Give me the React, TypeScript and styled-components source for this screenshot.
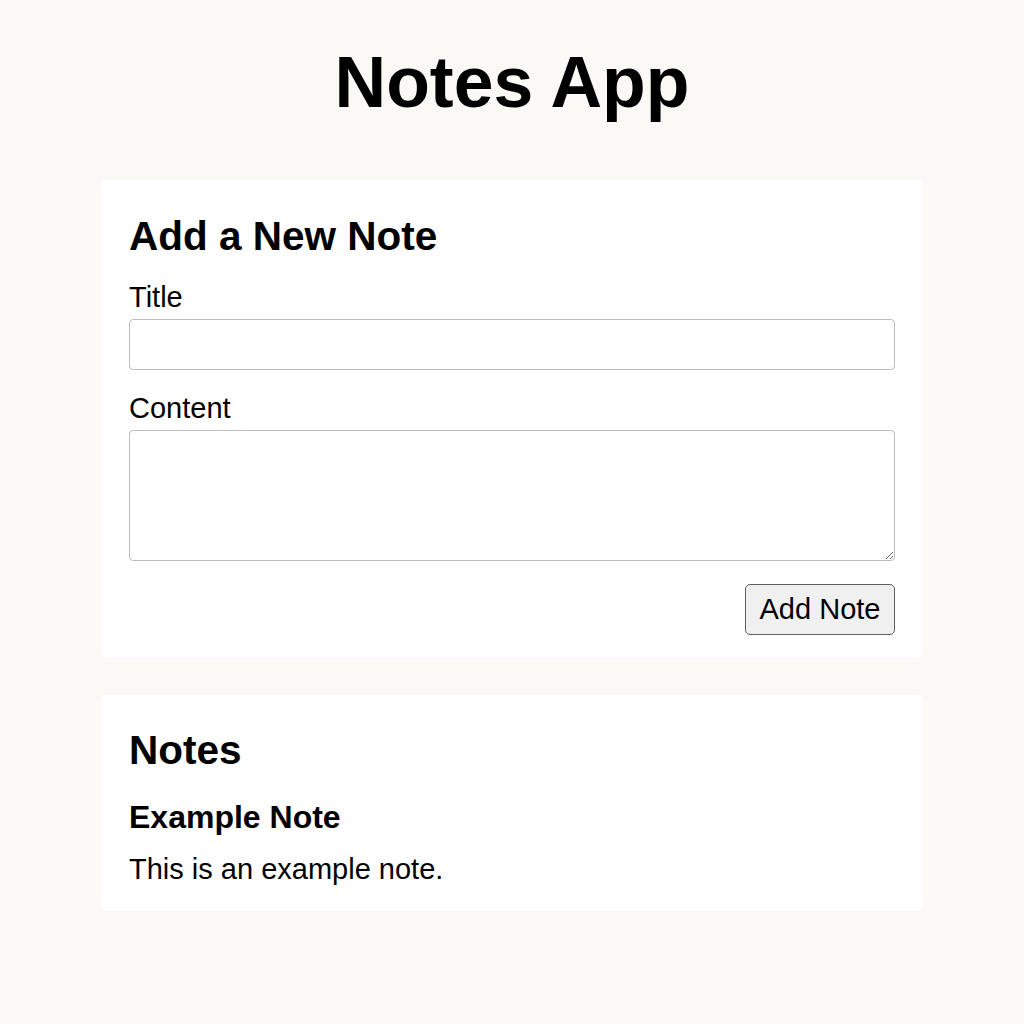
import React from "react";
import styled, { createGlobalStyle } from "styled-components";

const Global = createGlobalStyle`
  html, body { margin: 0; padding: 0; background: #faf9f5; }
  body { font-family: "Liberation Sans", Arial, sans-serif; color: #000; }
  * { box-sizing: border-box; }
`;

const Page = styled.div`
  width: 822px;
  margin: 0 auto;
  padding-top: 40px;
  padding-bottom: 40px;
  display: flex;
  flex-direction: column;
`;

const AppTitle = styled.h1`
  margin: 0 0 56px;
  font-size: 71.5px;
  line-height: 84px;
  font-weight: 700;
  text-align: center;
`;

const Card = styled.section<{ $pad: string; $gap?: number }>`
  background: #fff;
  border-radius: 6px;
  padding: ${(p) => p.$pad};
  margin-bottom: ${(p) => p.$gap ?? 0}px;
  display: flex;
  flex-direction: column;
`;

const CardTitle = styled.h2<{ $mb: number }>`
  margin: 0 0 ${(p) => p.$mb}px;
  font-size: 40.5px;
  line-height: 48px;
  font-weight: 700;
`;

const Label = styled.label<{ $mt?: number }>`
  display: block;
  margin: ${(p) => p.$mt ?? 0}px 0 6px;
  font-size: 29px;
  line-height: 32px;
`;

const TextInput = styled.input`
  display: block;
  width: 100%;
  height: 51px;
  border: 1px solid #bdbdbd;
  border-radius: 4px;
  background: #fff;
  font-family: inherit;
  font-size: 24px;
  padding: 0 10px;
  outline: none;
`;

const TextArea = styled.textarea`
  display: block;
  width: 100%;
  height: 131px;
  border: 1px solid #bdbdbd;
  border-radius: 4px;
  background: #fff;
  font-family: inherit;
  font-size: 24px;
  padding: 8px 10px;
  outline: none;
  resize: vertical;
`;

const Actions = styled.div`
  display: flex;
  justify-content: flex-end;
  margin-top: 23px;
`;

const Button = styled.button`
  height: 51px;
  width: 150px;
  padding: 0;
  border: 1px solid #5f5f5f;
  border-radius: 5px;
  background: #f0f0f0;
  font-family: "Liberation Sans", Arial, sans-serif;
  font-size: 29px;
  color: #000;
  cursor: pointer;
`;

const NoteTitle = styled.h3`
  margin: 0 0 18px;
  font-size: 32px;
  line-height: 36px;
  font-weight: 700;
`;

const NoteBody = styled.p`
  margin: 0;
  font-size: 29px;
  line-height: 32px;
`;

export default function App() {
  return (
    <>
      <Global />
      <Page>
        <AppTitle>Notes App</AppTitle>
        <Card $pad="32px 28px 23px" $gap={37}>
          <CardTitle $mb={21}>Add a New Note</CardTitle>
          <Label htmlFor="title">Title</Label>
          <TextInput id="title" type="text" />
          <Label htmlFor="content" $mt={22}>Content</Label>
          <TextArea id="content" />
          <Actions>
            <Button type="button">Add Note</Button>
          </Actions>
        </Card>
        <Card $pad="31px 28px 26px">
          <CardTitle $mb={25}>Notes</CardTitle>
          <NoteTitle>Example Note</NoteTitle>
          <NoteBody>This is an example note.</NoteBody>
        </Card>
      </Page>
    </>
  );
}
